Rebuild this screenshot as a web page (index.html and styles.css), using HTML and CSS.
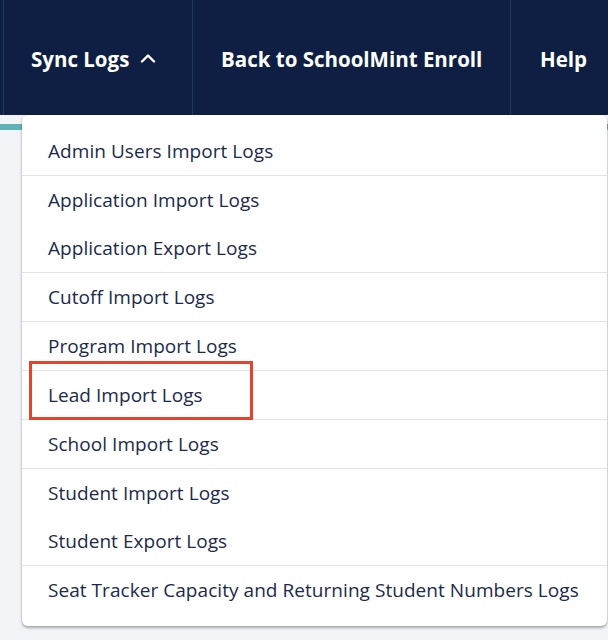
FILE: index.html
```html
<!DOCTYPE html>
<html lang="en">
<head>
  <meta charset="UTF-8" />
  <title>Sync Logs</title>
  <link rel="stylesheet" href="styles.css">
</head>
<body>
  <header class="topbar">
    <nav class="nav">
      <div class="nav-item open">
        Sync Logs
        <svg class="chevron" width="16" height="10" viewBox="0 0 16 10"><path d="M2 8.5 L8 2.5 L14 8.5" fill="none" stroke="#fff" stroke-width="2.4" stroke-linecap="round" stroke-linejoin="round"/></svg>
      </div>
      <div class="nav-item back">Back to SchoolMint Enroll</div>
      <div class="nav-item help">Help</div>
    </nav>

    <!-- menu aberto de Sync Logs -->
    <ul class="dropdown">
      <li class="group">
        <a>Admin Users Import Logs</a>
      </li>
      <li class="group">
        <a>Application Import Logs</a>
        <a>Application Export Logs</a>
      </li>
      <li class="group"><a>Cutoff Import Logs</a></li>
      <li class="group"><a>Program Import Logs</a></li>
      <li class="group"><a class="marked">Lead Import Logs</a></li>
      <li class="group"><a>School Import Logs</a></li>
      <li class="group">
        <a>Student Import Logs</a>
        <a>Student Export Logs</a>
      </li>
      <li class="group"><a>Seat Tracker Capacity and Returning Student Numbers Logs</a></li>
    </ul>
  </header>

  <main class="content">
    <div class="accent"></div>
  </main>
</body>
</html>
```

FILE: styles.css
```css
* { margin: 0; padding: 0; box-sizing: border-box; }
body {
  font-family: 'Open Sans', sans-serif;
  background: #f3f4f8;
  min-height: 100vh;
  color: #1b2a4c;
  overflow: hidden;
}
.topbar {
  position: relative;
}
.nav {
  display: flex;
  height: 115px;
  background-color: #0e1f43;
  padding-left: 3px;
}
.nav-item {
  flex-shrink: 0;
  display: flex;
  align-items: center;
  gap: 11px;
  padding: 2px 27px 0 27px;
  border-left: 1px solid #1d3d5c;
  color: #fff;
  font-weight: 700;
  font-size: 20.5px;
  white-space: nowrap;
}
.nav-item.open {
  width: 189px;
  padding-right: 0;
}
.nav-item.back {
  width: 318px;
  padding: 2px 0 0 28px;
}
.nav-item.help {
  padding-left: 29px;
}
.chevron {
  margin-top: -2px;
}
.content {
  padding-top: 9px;
}
.accent {
  height: 6px;
  background-color: #5fb3bb;
}
.dropdown {
  list-style: none;
  position: absolute;
  top: 115px;
  left: 22px;
  width: 585px;
  background: #fff;
  border-radius: 6px;
  padding: 12px 0 12px;
  box-shadow: 0 2px 3px rgba(0,0,0,0.3), 0 0 3px rgba(0,0,0,0.08);
  z-index: 10;
}
.group {
  border-top: 1px solid #e3e5ea;
}
.group:first-child {
  border-top: none;
}
.group a {
  position: relative;
  display: block;
  height: 48px;
  line-height: 48px;
  padding-left: 26px;
  font-size: 19px;
  letter-spacing: 0.05px;
  color: #1b2a4c;
  white-space: nowrap;
}
.marked::after {
  content: "";
  box-sizing: border-box;
  position: absolute;
  left: 7px;
  top: -10px;
  width: 224px;
  height: 59px;
  border: 3px solid #e5432b;
}
```
